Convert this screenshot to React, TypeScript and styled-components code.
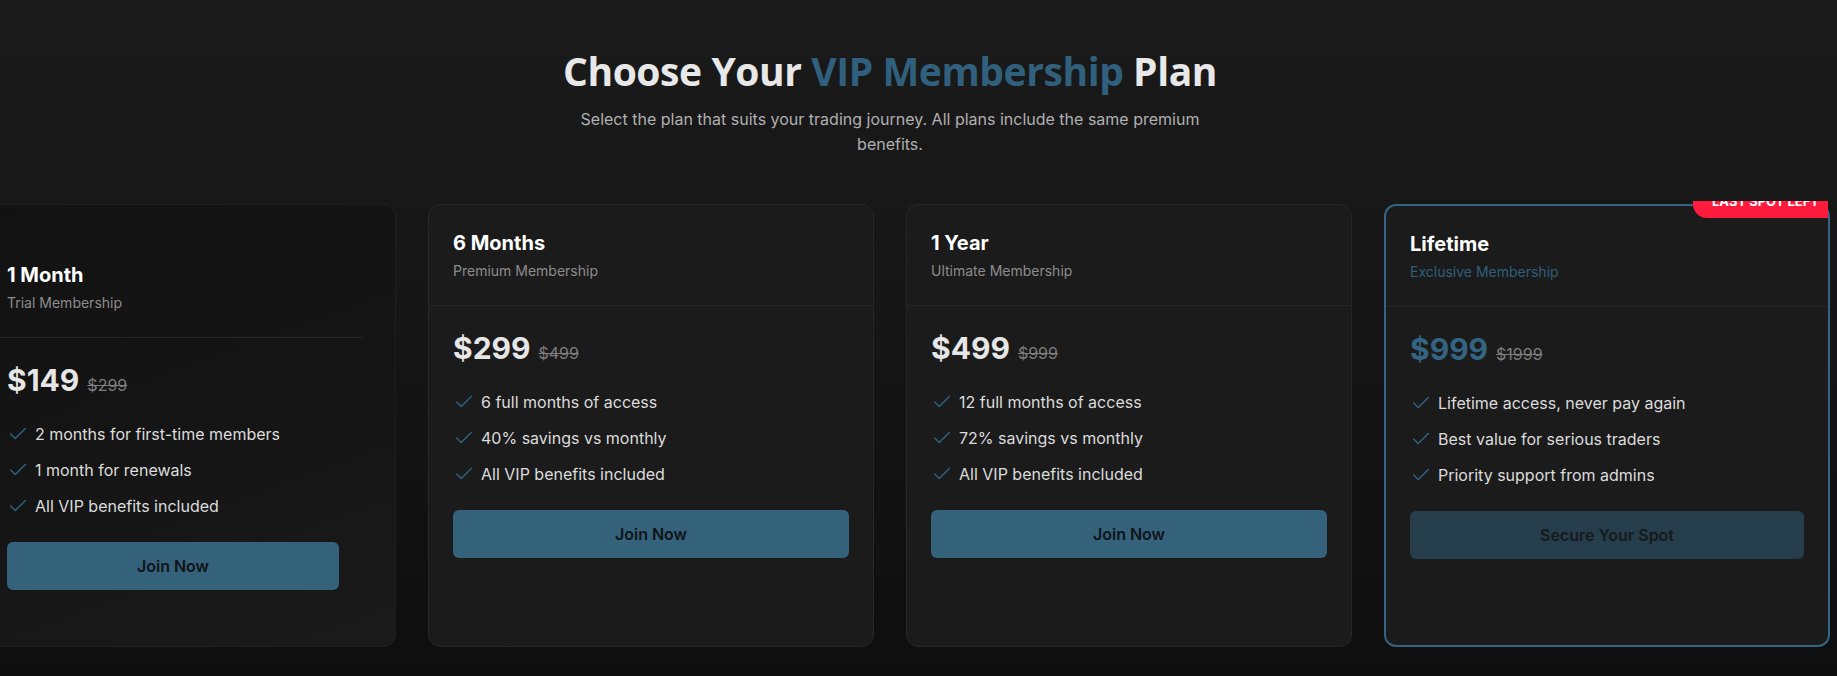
import React from "react";
import styled, { createGlobalStyle, css } from "styled-components";
import { Check } from "lucide-react";

const GlobalStyle = createGlobalStyle`
  html, body { margin: 0; padding: 0; }
  body {
    background: #0f0f0f;
    font-family: Inter, "Noto Sans", sans-serif;
    overflow: hidden;
  }
  * { box-sizing: border-box; }
`;

const Page = styled.main`
  min-height: 676px;
  background: linear-gradient(180deg, #1a1a1a 0%, #161616 45%, #0e0e0e 100%);
  padding-top: 47px;
`;

const Header = styled.header`
  padding-right: 57px;
  display: flex;
  flex-direction: column;
  align-items: center;
  text-align: center;
`;

const Title = styled.h1`
  margin: 0;
  font-family: "Open Sans", "Noto Sans", sans-serif;
  font-weight: 700;
  font-size: 39px;
  line-height: 48px;
  color: #e8e8e8;
  letter-spacing: -0.42px;
`;

const Accent = styled.span`
  color: #30607d;
`;

const Subtitle = styled.p`
  margin: 12px 0 0;
  max-width: 640px;
  font-size: 16px;
  line-height: 25px;
  color: #b0b0b0;
`;

const Viewport = styled.section`
  margin-top: 44px;
  overflow: hidden;
  padding: 3px 57px 30px 0;
  display: flex;
  justify-content: center;
`;

const Track = styled.div`
  display: flex;
  gap: 32px;
  align-items: stretch;
`;

const Card = styled.article<{ $variant?: "faded" | "featured" }>`
  position: relative;
  flex: 0 0 446px;
  width: 446px;
  border-radius: 12px;
  border: 1px solid #262626;
  background: #1b1b1b;
  display: flex;
  flex-direction: column;
  ${(p) =>
    p.$variant === "faded" &&
    css`
      padding: 32px;
      background: linear-gradient(160deg, #121212 0%, #151515 55%, #1a1a1a 100%);
      border-color: #1f1f1f;
    `}
  ${(p) =>
    p.$variant === "featured" &&
    css`
      border: 2px solid #336482;
    `}
`;

const Badge = styled.div`
  position: absolute;
  top: -17px;
  right: 0;
  padding: 4px 9px 9px 19px;
  background: #ff1b3d;
  color: #ffffff;
  font-size: 13px;
  line-height: 16px;
  font-weight: 700;
  text-transform: uppercase;
  border-bottom-left-radius: 14px;
  border-top-right-radius: 10px;
`;

const CardHead = styled.div`
  padding: 24px;
  border-bottom: 1px solid #252525;
`;

const PlanName = styled.h3`
  margin: 0;
  font-size: 20px;
  line-height: 28px;
  font-weight: 700;
  color: #ffffff;
`;

const PlanTag = styled.p<{ $accent?: boolean }>`
  margin: 4px 0 0;
  font-size: 14px;
  line-height: 20px;
  color: ${(p) => (p.$accent ? "#2f5f7b" : "#8c8c8c")};
`;

const CardBody = styled.div`
  padding: 24px;
  display: flex;
  flex-direction: column;
`;

const PriceRow = styled.div`
  display: flex;
  align-items: baseline;
  gap: 8px;
  height: 36px;
`;

const Price = styled.span<{ $accent?: boolean }>`
  font-size: 30px;
  line-height: 36px;
  font-weight: 700;
  color: ${(p) => (p.$accent ? "#336583" : "#e6e6e6")};
`;

const OldPrice = styled.span`
  font-size: 16px;
  line-height: 24px;
  color: #7e7e7e;
  text-decoration: line-through;
`;

const Features = styled.ul`
  list-style: none;
  margin: 24px 0 0;
  padding: 0;
  display: flex;
  flex-direction: column;
  gap: 12px;
`;

const Feature = styled.li`
  display: flex;
  align-items: center;
  gap: 6px;
  font-size: 16px;
  line-height: 24px;
  color: #dcdcdc;
  svg {
    flex: 0 0 auto;
    color: #2d6584;
  }
`;

const Button = styled.button<{ $muted?: boolean }>`
  margin-top: 24px;
  height: 48px;
  width: 100%;
  border: none;
  border-radius: 6px;
  background: ${(p) => (p.$muted ? "#263e4b" : "#34627b")};
  color: ${(p) => (p.$muted ? "#151a1d" : "#101418")};
  font-family: Inter, "Noto Sans", sans-serif;
  font-size: 16px;
  font-weight: 600;
  cursor: pointer;
`;

type Plan = {
  name: string;
  tag: string;
  price: string;
  old: string;
  features: string[];
  cta: string;
  variant?: "faded" | "featured";
  badge?: string;
};

const plans: Plan[] = [
  {
    name: "1 Month",
    tag: "Trial Membership",
    price: "$149",
    old: "$299",
    features: ["2 months for first-time members", "1 month for renewals", "All VIP benefits included"],
    cta: "Join Now",
    variant: "faded",
  },
  {
    name: "6 Months",
    tag: "Premium Membership",
    price: "$299",
    old: "$499",
    features: ["6 full months of access", "40% savings vs monthly", "All VIP benefits included"],
    cta: "Join Now",
  },
  {
    name: "1 Year",
    tag: "Ultimate Membership",
    price: "$499",
    old: "$999",
    features: ["12 full months of access", "72% savings vs monthly", "All VIP benefits included"],
    cta: "Join Now",
  },
  {
    name: "Lifetime",
    tag: "Exclusive Membership",
    price: "$999",
    old: "$1999",
    features: ["Lifetime access, never pay again", "Best value for serious traders", "Priority support from admins"],
    cta: "Secure Your Spot",
    variant: "featured",
    badge: "Last Spot Left",
  },
];

export default function App() {
  return (
    <>
      <GlobalStyle />
      <Page>
        <Header>
          <Title>
            Choose Your <Accent>VIP Membership</Accent> Plan
          </Title>
          <Subtitle>
            Select the plan that suits your trading journey. All plans include the same premium benefits.
          </Subtitle>
        </Header>
        <Viewport>
          <Track>
            {plans.map((p) => {
              const featured = p.variant === "featured";
              return (
                <Card key={p.name} $variant={p.variant}>
                  {p.badge && <Badge>{p.badge}</Badge>}
                  <CardHead>
                    <PlanName>{p.name}</PlanName>
                    <PlanTag $accent={featured}>{p.tag}</PlanTag>
                  </CardHead>
                  <CardBody>
                    <PriceRow>
                      <Price $accent={featured}>{p.price}</Price>
                      <OldPrice>{p.old}</OldPrice>
                    </PriceRow>
                    <Features>
                      {p.features.map((f) => (
                        <Feature key={f}>
                          <Check size={22} strokeWidth={1.5} />
                          {f}
                        </Feature>
                      ))}
                    </Features>
                    <Button $muted={featured}>{p.cta}</Button>
                  </CardBody>
                </Card>
              );
            })}
          </Track>
        </Viewport>
      </Page>
    </>
  );
}
